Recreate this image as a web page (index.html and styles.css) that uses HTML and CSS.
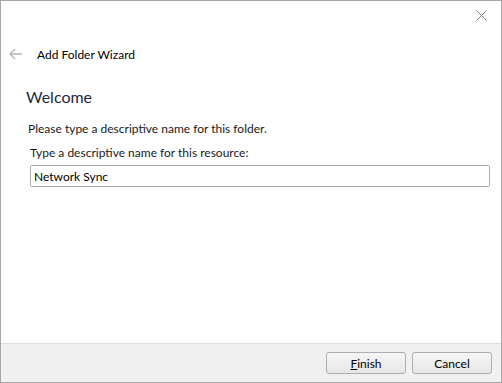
FILE: index.html
```html
<!DOCTYPE html>
<html>
<head>
<meta charset="utf-8">
<link rel="stylesheet" href="styles.css">
</head>
<body>
<div class="window">
  <div class="titlebar">
    <svg class="close" width="11" height="11" viewBox="0 0 11 11"><path d="M0.5 0.5 L10.5 10.5 M10.5 0.5 L0.5 10.5" stroke="#808080" stroke-width="1" fill="none"/></svg>
  </div>
  <div class="header">
    <svg class="back" width="14" height="12" viewBox="0 0 14 12"><path d="M6 1 L1 6 L6 11 M1 6 H13" stroke="#b4b4b4" stroke-width="1.3" fill="none"/></svg>
    <span class="wiz-title">Add Folder Wizard</span>
  </div>
  <div class="content">
    <h1 class="heading">Welcome</h1>
    <p class="desc">Please type a descriptive name for this folder.</p>
    <label class="label">Type a descriptive name for this resource:</label>
    <div class="input">Network Sync</div>
  </div>
  <div class="footer">
    <button class="btn"><u>F</u>inish</button>
    <button class="btn">Cancel</button>
  </div>
</div>
</body>
</html>
```
FILE: styles.css
```css
* { box-sizing: border-box; }
html, body { margin: 0; padding: 0; }
body {
  width: 502px;
  height: 383px;
  font-family: "Lato", "Noto Sans", sans-serif;
  font-size: 12px;
  color: #1a1a1a;
  background: #fff;
}
.window {
  width: 502px;
  height: 383px;
  border: 1px solid #a6a6a6;
  display: flex;
  flex-direction: column;
  background: #fff;
}
.titlebar {
  height: 37px;
  display: flex;
  justify-content: flex-end;
  align-items: flex-start;
  padding: 9px 14px 0 0;
}
.header {
  height: 32px;
  display: flex;
  align-items: center;
  padding-left: 8px;
}
.back { margin-right: 14px; }
.wiz-title { font-size: 12px; color: #000; }
.content {
  flex: 1;
  padding: 16px 11px 0 25px;
}
.heading {
  margin: 0;
  font-weight: normal;
  font-size: 16px;
  color: #1e2a3c;
  line-height: 22px;
}
.desc { margin: 13px 0 0 2px; line-height: 15px; }
.label { display: block; margin: 9px 0 0 4px; line-height: 15px; }
.input {
  margin: 5px 0 0 4px;
  height: 22px;
  border: 1px solid #a9a9a9;
  border-radius: 2px;
  padding: 3px 0 0 3px;
  color: #000;
}
.footer {
  height: 39px;
  background: #f0f0f0;
  border-top: 1px solid #dfdfdf;
  display: flex;
  justify-content: flex-end;
  align-items: center;
  gap: 6px;
  padding-right: 9px;
}
.btn {
  width: 80px;
  height: 22px;
  font-family: inherit;
  font-size: 12px;
  color: #000;
  background: linear-gradient(#f6f6f6, #e6e6e6);
  border: 1px solid #adadad;
  border-radius: 3px;
  padding: 0;
}
```
